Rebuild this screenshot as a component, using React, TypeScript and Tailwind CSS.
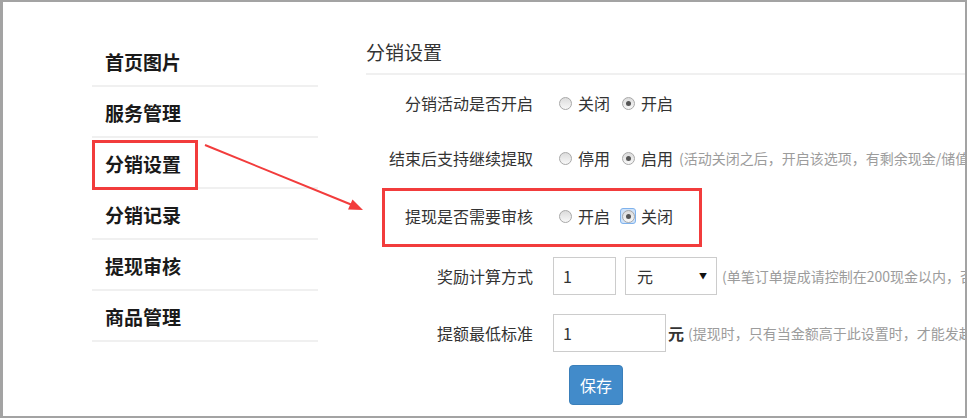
import React from 'react';

const font = { fontFamily: '"Microsoft YaHei", "Noto Sans CJK SC", "Noto Sans", sans-serif' };

const menu = ['首页图片', '服务管理', '分销设置', '分销记录', '提现审核', '商品管理'];

const Radio = ({ checked, focused }: { checked?: boolean; focused?: boolean }) => (
  <span
    className={`flex items-center justify-center w-[16px] h-[16px] rounded-[3px] ${
      focused ? 'bg-[#cfe3fa] border border-[#7fb2ec]' : ''
    }`}
  >
    <span className="flex items-center justify-center w-[13px] h-[13px] rounded-full border border-[#a8a8a8] bg-gradient-to-b from-[#dcdcdc] to-[#f8f8f8]">
      {checked && <span className="w-[5px] h-[5px] rounded-full bg-[#555]" />}
    </span>
  </span>
);

const RadioGroup = ({
  options,
  checkedIndex,
  focused,
}: {
  options: string[];
  checkedIndex: number;
  focused?: boolean;
}) => (
  <div className="flex items-center ml-[4px]">
    {options.map((opt, i) => (
      <div key={i} className={`flex items-center ${i > 0 ? 'ml-[10px]' : ''}`}>
        <Radio checked={i === checkedIndex} focused={focused && i === checkedIndex} />
        <span className="ml-[5px] text-[16px] text-[#333]">{opt}</span>
      </div>
    ))}
  </div>
);

const Row = ({
  label,
  className,
  children,
}: {
  label: string;
  className?: string;
  children: React.ReactNode;
}) => (
  <div className={`flex items-center h-[38px] ${className ?? ''}`}>
    <div className="w-[167px] flex-none text-right text-[16px] text-[#333] whitespace-nowrap">{label}</div>
    <div className="flex items-center ml-[20px] whitespace-nowrap">{children}</div>
  </div>
);

const Hint = ({ children, className }: { children: React.ReactNode; className?: string }) => (
  <span className={`text-[14px] text-[#9c9c9c] whitespace-nowrap ${className ?? ''}`}>{children}</span>
);

export default function App() {
  return (
    <div
      style={font}
      className="relative w-[967px] h-[418px] overflow-hidden bg-white border-[#a3a3a3] border-t-2 border-l-[3px] border-r-2 border-b-2"
    >
      <div className="flex">
        {/* sidebar */}
        <div className="ml-[89px] mt-[34px] w-[226px] flex-none">
          {menu.map((m) => (
            <div
              key={m}
              className="h-[51px] flex items-center pl-[13px] pt-[3px] border-b-2 border-[#f0f0f0] text-[19px] font-bold text-[#1a1a1a]"
            >
              {m}
            </div>
          ))}
        </div>

        {/* panel */}
        <div className="ml-[48px] pt-[37px] flex-1 min-w-0">
          <div className="h-[36px] pb-[10px] border-b-2 border-[#f0f0f0] text-[19px] leading-[26px] text-[#333]">
            分销设置
          </div>

          <Row label="分销活动是否开启" className="mt-[9px]">
            <RadioGroup options={['关闭', '开启']} checkedIndex={1} />
          </Row>

          <Row label="结束后支持继续提取" className="mt-[17px]">
            <RadioGroup options={['停用', '启用']} checkedIndex={1} />
            <Hint className="ml-[6px]">(活动关闭之后，开启该选项，有剩余现金/储值的用户仍可继续提取)</Hint>
          </Row>

          <Row label="提现是否需要审核" className="mt-[20px]">
            <RadioGroup options={['开启', '关闭']} checkedIndex={1} focused />
          </Row>

          <Row label="奖励计算方式" className="mt-[22px]">
            <div className="w-[63px] h-[38px] border border-[#ccc] flex items-center pl-[9px] text-[16px] text-[#333]">1</div>
            <div className="ml-[9px] w-[92px] h-[38px] border border-[#ccc] flex items-center justify-between pl-[11px] pr-[9px] text-[16px] text-[#333]">
              <span>元</span>
              <span className="text-[8px] text-[#111]">▼</span>
            </div>
            <Hint className="ml-[5px]">(单笔订单提成请控制在200现金以内，否则无法正常提现)</Hint>
          </Row>

          <Row label="提额最低标准" className="mt-[19px]">
            <div className="w-[113px] h-[38px] border border-[#ccc] flex items-center pl-[9px] text-[16px] text-[#333]">1</div>
            <span className="ml-[2px] text-[16px] font-bold text-[#333]">元</span>
            <Hint className="ml-[4px]">(提现时，只有当金额高于此设置时，才能发起提现申请)</Hint>
          </Row>

          <div className="ml-[203px] mt-[13px]">
            <button className="w-[54px] h-[40px] rounded-[4px] bg-[#428bca] border border-[#3a7fba] text-white text-[16px]">
              保存
            </button>
          </div>
        </div>
      </div>

      {/* annotations */}
      <div className="absolute left-[89px] top-[138px] w-[106px] h-[50px] border-[3px] border-[#f23c3c]" />
      <div className="absolute left-[379px] top-[186px] w-[320px] h-[59px] border-[3px] border-[#f23c3c]" />
      <svg className="absolute left-0 top-0" width="962" height="414" viewBox="0 0 962 414">
        <line x1="202" y1="143" x2="348" y2="202.5" stroke="#f23c3c" strokeWidth="2" />
        <polygon points="360,208 345,207.5 349.5,197.5" fill="#f23c3c" />
      </svg>
    </div>
  );
}
